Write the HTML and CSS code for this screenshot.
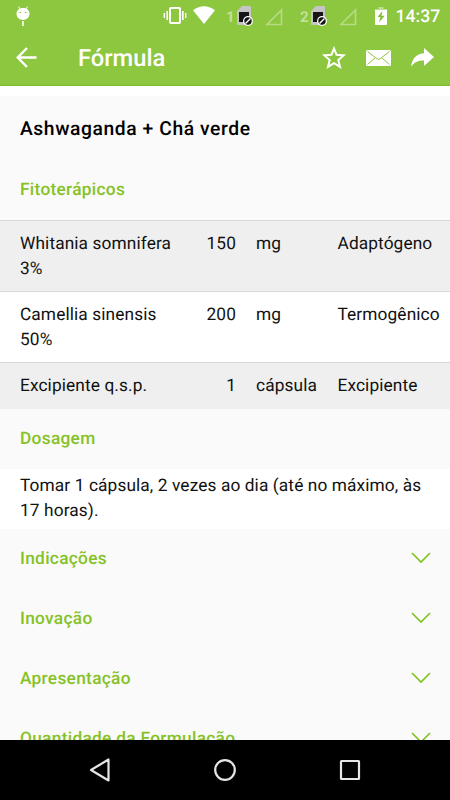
FILE: index.html
```html
<!DOCTYPE html>
<html lang="pt-BR">
<head>
<meta charset="utf-8">
<title>Fórmula</title>
<link rel="stylesheet" href="styles.css">
</head>
<body>
<div class="screen">
  <header class="top">
    <div class="status">
      <svg class="debug" width="14" height="21" viewBox="0 0 14 21" fill="#fff"><path d="M2.500.5 4 3M11.500.5 10 3" stroke="#fff"/><path d="M.5 7.500C.5 0 13.500 0 13.500 7.500 13.500 16 .5 16 .5 7.500z"/><path d="M6.200 15h1.600v5H6.200z"/><path d="M3.500 6h1.500v1H3.500zM9 6h1.500v1H9z" fill="#8dc63f"/></svg>
      <svg class="vibrate" width="24" height="19" viewBox="0 0 24 19" fill="none" stroke="#fff"><rect x="7" y="2" width="10" height="15" rx=".8" stroke-width="2"/><path d="M4.200 5v9M19.800 5v9" stroke-width="1.700"/><path d="M1.300 7v5M22.700 7v5" stroke-width="1.400"/></svg>
      <svg class="wifi" width="22" height="18" viewBox="0 0 22 18" fill="#fff"><path d="M0 4.200Q11-3.800 22 4.200L11 18z"/></svg>
      <span class="slot">1</span>
      <svg class="sim" width="17" height="20" viewBox="0 0 17 20"><path d="M5 0h8q1 0 1 1v18H1q-1 0-1-1V5z" fill="#c5c5c5"/><path d="M2 6h10v10H2z" fill="#151515"/><circle cx="11" cy="15" r="5" fill="#fff"/><circle cx="11" cy="15" r="3.700" fill="#151515"/><path d="m8.500 17.500 5-5" stroke="#fff" stroke-width="1.500"/></svg>
      <svg class="signal" width="18" height="18" viewBox="0 0 18 18"><path d="M16.500 2v14.500H2z" fill="none" stroke="#b8da83" stroke-width="1.700"/></svg>
      <span class="slot two">2</span>
      <svg class="sim" width="17" height="20" viewBox="0 0 17 20"><path d="M5 0h8q1 0 1 1v18H1q-1 0-1-1V5z" fill="#c5c5c5"/><path d="M2 6h10v10H2z" fill="#151515"/><circle cx="11" cy="15" r="5" fill="#fff"/><circle cx="11" cy="15" r="3.700" fill="#151515"/><path d="m8.500 17.500 5-5" stroke="#fff" stroke-width="1.500"/></svg>
      <svg class="signal" width="18" height="18" viewBox="0 0 18 18"><path d="M16.500 2v14.500H2z" fill="none" stroke="#b8da83" stroke-width="1.700"/></svg>
      <svg class="battery" width="12" height="18" viewBox="0 0 12 18"><path d="M3.500 0h5v2H12v4H0V2h3.500z" fill="#bfde91"/><path d="M0 3h12v14q0 1-1 1H1q-1 0-1-1z" fill="#fff"/><path d="m7.500 4-5 6h3L4 15.500l5.700-6.800H6.500z" fill="#83bd33"/></svg>
      <time class="clock">14:37</time>
    </div>
    <div class="bar">
      <svg class="back" width="21" height="21" viewBox="0 0 21 21" fill="none" stroke="#fff" stroke-width="2.400"><path d="M20.500 10.500H2M11 1 1.700 10.500 11 20"/></svg>
      <h1>Fórmula</h1>
      <svg class="star" width="24" height="23" viewBox="0 0 24 23" fill="none" stroke="#fff" stroke-width="2"><path d="m12 2.500 2.500 6.200 7.200.6-5.400 4.700 1.700 6.800-6-3.700-6 3.700L7.700 14 2.300 9.300l7.200-.6z"/></svg>
      <svg class="mail" width="25" height="16" viewBox="0 0 25 16"><rect width="25" height="16" rx="1.500" fill="#fff"/><path d="m1.500 1.500 9.300 7.200q1.700 1.200 3.400 0l9.300-7.200M1.500 14.500 9 8M23.500 14.500 16 8" fill="none" stroke="#8dc63f" stroke-width="1"/></svg>
      <svg class="share" width="23" height="19" viewBox="0 0 23 19" fill="#fff"><path d="M13 0v5.200C4 6 1 12 0 19c3-5 7-6.500 13-6.500V18l10-9z"/></svg>
    </div>
  </header>
  <main class="content">
    <h2 class="name">Ashwaganda + Chá verde</h2>
    <h3 class="section">Fitoterápicos</h3>
    <div class="table">
      <div class="row"><span>Whitania somnifera 3%</span><span class="qty">150</span><span>mg</span><span>Adaptógeno</span></div>
      <div class="row alt"><span>Camellia sinensis 50%</span><span class="qty">200</span><span>mg</span><span>Termogênico</span></div>
      <div class="row last"><span>Excipiente q.s.p.</span><span class="qty">1</span><span>cápsula</span><span>Excipiente</span></div>
    </div>
    <h3 class="section">Dosagem</h3>
    <p class="dose">Tomar 1 cápsula, 2 vezes ao dia (até no máximo, às 17 horas).</p>
    <h3 class="section">Indicações<svg class="chev" width="20" height="12" viewBox="0 0 20 12"><path d="m1 1 9 9 9-9"/></svg></h3>
    <h3 class="section">Inovação<svg class="chev" width="20" height="12" viewBox="0 0 20 12"><path d="m1 1 9 9 9-9"/></svg></h3>
    <h3 class="section">Apresentação<svg class="chev" width="20" height="12" viewBox="0 0 20 12"><path d="m1 1 9 9 9-9"/></svg></h3>
    <h3 class="section">Quantidade da Formulação<svg class="chev" width="20" height="12" viewBox="0 0 20 12"><path d="m1 1 9 9 9-9"/></svg></h3>
  </main>
  <nav class="nav">
    <svg width="22" height="26" viewBox="0 0 22 26"><path d="M19.500 2.500v21L2 13z"/></svg>
    <svg width="22" height="26" viewBox="0 0 22 26"><circle cx="11" cy="13" r="9.800"/></svg>
    <svg width="22" height="26" viewBox="0 0 22 26"><rect x="2" y="4" width="18" height="18" rx=".5"/></svg>
  </nav>
</div>
</body>
</html>
```
FILE: styles.css
```css
* { box-sizing: border-box; }
body, h1, h2, h3, p { margin: 0; }
body { font-family: Roboto, sans-serif; color: #111; text-rendering: geometricPrecision; }
svg { display: block; flex: none; }
.screen { width: 450px; height: 800px; display: flex; flex-direction: column; overflow: hidden; background: #fafafa; }
.top { flex: none; height: 86px; background: #8dc63f; border-bottom: 1px solid #80bc2a; color: #fff; }
.status { height: 32px; display: flex; align-items: flex-start; padding: 6px 0 0 16px; }
.vibrate { margin-left: 133px; }
.wifi { margin-left: 6px; }
.slot { width: 7px; margin: 1px 0 0 11px; font-size: 15px; line-height: 20px; font-weight: 700; color: #c3e096; }
.sim { margin-left: 4px; }
.signal { margin: 2px 0 0 11px; }
.slot.two { width: 8px; margin-left: 17px; }
.slot.two + .sim { margin-left: 3px; }
.battery { margin-left: 18px; margin-top: 1px; }
.clock { margin: 0 0 0 8.500px; font-size: 17.600px; line-height: 22px; font-weight: 500; }
.bar { height: 53px; display: flex; align-items: center; padding: 0 16px 2px 16px; }
.bar h1 { margin: 1px auto 0 41px; font-size: 23.700px; line-height: 30px; font-weight: 500; }
.mail { margin: 0 20px 0 20px; }
.content { flex: 1; min-height: 0; overflow: hidden; border-top: 10px solid #fff; }
.name { padding: 20px 20px 0; height: 64px; font-size: 19.300px; line-height: 25px; font-weight: 500; letter-spacing: .58px; color: #000; }
.section { height: 60px; display: flex; align-items: flex-start; justify-content: space-between; padding: 18px 19px 0 20px; font-size: 17.300px; line-height: 25px; font-weight: 500; letter-spacing: .3px; color: #85c226; }
.chev { margin-top: 5px; fill: none; stroke: #7fc31c; stroke-width: 1.600; }
.table, .dose { font-size: 17.300px; line-height: 25px; letter-spacing: .11px; }
.row { display: grid; grid-template-columns: 160px 36px 61.500px 1fr; column-gap: 20px; height: 71px; padding: 11px 0 0 20px; background: #efefef; border-top: 1px solid #d8d8d8; }
.row.alt { background: #fff; }
.row.last { height: 47px; }
.qty { text-align: right; }
.dose { height: 60px; padding: 5px 20px 0; background: #fff; }
.nav { flex: none; height: 60px; background: #000; display: flex; justify-content: center; align-items: center; gap: 103px; }
.nav svg { fill: none; stroke: #e5e5e5; stroke-width: 2.200; stroke-linejoin: round; }
```
